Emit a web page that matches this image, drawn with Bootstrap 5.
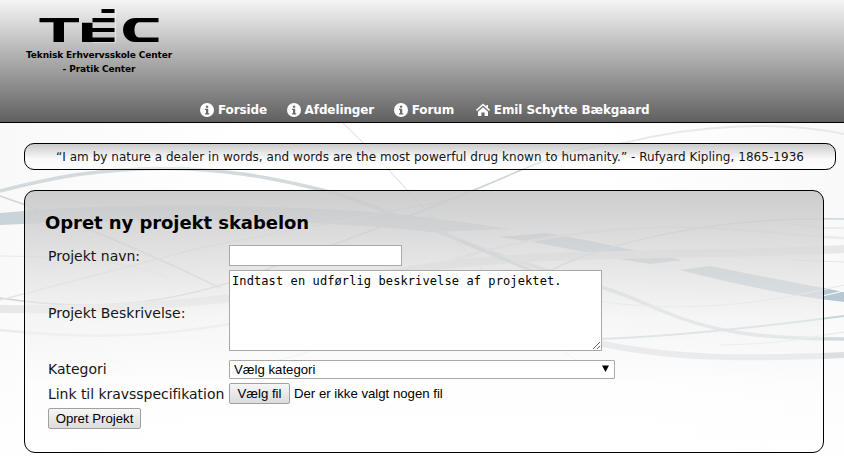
<!DOCTYPE html>
<html lang="da">
<head>
<meta charset="utf-8">
<meta name="viewport" content="width=device-width, initial-scale=1">
<title>Opret ny projekt skabelon</title>
<link href="https://cdn.jsdelivr.net/npm/bootstrap@5.3.0/dist/css/bootstrap.min.css" rel="stylesheet">
<style>
body{font:14px/17px "DejaVu Sans",sans-serif;color:#151515;background:#fff;height:471px}
.backdrop{z-index:-1}
.site-header{height:123px;border-bottom:1px solid #000;background:linear-gradient(#f5f5f5,#606060)}
.brand{width:198px;padding-top:8px;font-weight:bold;font-size:9px;line-height:14px;letter-spacing:-.11px;color:#000}
.brand svg{margin-bottom:5px}
.site-nav{padding-left:200px;margin-bottom:3px;gap:19.5px}
.site-nav a{font-weight:bold;font-size:12px;line-height:18px;letter-spacing:-.11px;color:#fff;gap:4px}
.site-nav a:last-child{margin-left:2.3px}
.quote{margin:20px 8px 0 24px;height:27px;border:1px solid #000;border-radius:10px;font-size:12px;line-height:26px;letter-spacing:.038px;background:linear-gradient(rgba(200,200,200,.95),rgba(250,250,250,.5) 60%,rgba(255,255,255,.4))}
.panel{margin:20px 20px 0 24px;height:263px;border:1px solid #000;border-radius:11px;padding:23px 20px 0;background:linear-gradient(rgba(200,200,200,.9),rgba(216,216,216,.78) 22%,rgba(240,240,240,.6) 48%,rgba(253,253,253,.45) 75%,rgba(255,255,255,.6))}
.panel h1{font-size:18px;line-height:18px;letter-spacing:-.06px;color:#000;margin:0 0 12px}
.sheet{display:grid;grid-template-columns:179px 386px;grid-template-rows:22px 86px 22px 21px 23px;row-gap:3px;column-gap:2px;margin-left:3px;align-items:center}
.sheet .lower{padding-top:2px}
.sheet .fit{letter-spacing:-.04px}
.sheet .fld{border:1px solid #a9a9a9;background-color:#fff;color:#000;padding:0;box-shadow:none}
#navn{width:173px;height:21px}
#beskrivelse{width:373px;height:81px;margin-bottom:4px;padding:2px;font:12px/16px "DejaVu Sans Mono",monospace;letter-spacing:.1px;resize:both}
.ctl{font:13.2px/15px "Liberation Sans",Arial,sans-serif;color:#000}
#kategori{height:19px;width:386px;border-radius:1px;padding:0 4px;font:13.2px/17px "Liberation Sans",Arial,sans-serif;background:#fff url("data:image/svg+xml,%3Csvg xmlns='http://www.w3.org/2000/svg' viewBox='0 0 7 7'%3E%3Cpath d='M0 .5h7L3.5 7z'/%3E%3C/svg%3E") no-repeat right 5px top 4px/7px 7px}
.old-btn{height:21px;border:1px solid #a0a0a0;border-radius:2px;padding:0;background:linear-gradient(#f6f6f6,#dcdcdc);color:#000;font:13.2px/19px "Liberation Sans",Arial,sans-serif}
.pick{width:61px}
.send{width:93px}
</style>
</head>
<body class="overflow-hidden position-relative">
<svg class="backdrop position-absolute top-0 start-0" width="844" height="471" viewBox="0 0 844 471" fill="none" aria-hidden="true">
  <defs>
    <linearGradient id="lf"><stop stop-color="#f9f9f9"/><stop offset="1" stop-color="#fff"/></linearGradient>
    <linearGradient id="fade" x2="0" y2="1"><stop offset=".45" stop-color="#fff" stop-opacity="0"/><stop offset="1" stop-color="#fff"/></linearGradient>
  </defs>
  <rect y="123" width="250" height="348" fill="url(#lf)"/>
  <rect x="594" y="123" width="250" height="348" fill="url(#lf)" transform="matrix(-1 0 0 1 1438 0)"/>
  <rect y="123" width="844" height="348" fill="url(#fade)"/>
  <path d="M0 191C60 176 100 169 160 168.500S270 177 322 190S450 240 530 265S610 288 660 310S760 339 844 339" stroke="#d3dadd" stroke-width="3.500"/>
  <path d="M0 213C90 204 200 204 300 208S450 220 510 229L430 232C360 224 200 214 0 225z" fill="#c8d4da"/>
  <path d="M498 237L545 233C590 240 640 252 682 260L650 264C600 257 550 243 498 237zM680 270L710 266C760 276 800 284 844 292V302C790 296 730 283 680 270z" fill="#b6c8d2"/>
  <path d="M822 296L844 291" stroke="#fff"/>
  <path d="M0 196C70 220 160 258 220 288" stroke="#ccd4d9" stroke-width="1.6"/>
  <path d="M0 298C90 312 170 306 260 272S390 225 474 190 560 150 624 143" stroke="#cbd2d8" stroke-width="1.6"/>
  <path d="M624 143C700 124 780 121 844 134" stroke="#e9e9e9" stroke-width="2"/>
  <path d="M343 123C380 158 410 195 450 235S480 265 485 285" stroke="#d8d8d8"/>
  <path d="M0 309C150 312 280 295 400 272S700 257 844 249" stroke="#e8e8e8" stroke-width="8"/>
  <path d="M0 330C110 342 190 335 300 310S430 255 560 236 760 234 844 238" stroke="#ebebeb" stroke-width="2.5"/>
  <path d="M0 256C100 257 150 268 170 278" stroke="#e9e9e9"/>
  <path d="M0 300L200 248 450 200" stroke="#e5e5e5" stroke-width="1.3"/>
  <path d="M540 276C600 242 720 216 844 219" stroke="#ccd5da" stroke-width="1.5"/>
  <path d="M600 339C680 336 760 327 844 316" stroke="#c5d5d9" stroke-width="1.8"/>
  <path d="M590 341C670 360 750 359 844 355" stroke="#dcdfe1" stroke-width="6"/>
  <path d="M590 300C680 314 760 305 844 285M720 345C790 344 820 335 844 332" stroke="#e6e6e6"/>
  <path d="M780 222C805 226 825 229 844 228M790 260L844 262" stroke="#e4e4e4" stroke-width="1.2"/>
  <path d="M460 241L540 274" stroke="#c2ced5" stroke-width="3"/>
  <path d="M270 362C310 354 340 340 375 325M560 348L578 362" stroke="#ededed"/>
</svg>

<header class="site-header d-flex flex-column justify-content-between">
  <div class="brand text-center">
    <svg class="d-block mx-auto" width="120" height="35" viewBox="39.5 8 120 35" aria-label="TEC">
      <path d="M103 9h13v33h-22v1h22" fill="none" stroke="#fff" stroke-opacity=".5"/>
      <path d="M40 18h39.500v4.300H64.500V42H54V22.300H40zM102 9h13v4h-13zM93 18h22v4.300H93zM82.500 22.800H93V28h22v4H93v5.500h22V42H82.500zM159 18v4.300h-19.500c-6 0-6 15.200 0 15.200H159V42h-23c-16 0-17-24 0-24z"/>
    </svg>
    <div>Teknisk Erhvervsskole Center</div>
    <div>- Pratik Center</div>
  </div>
  <svg class="d-none">
    <symbol id="info" viewBox="0 0 14 14"><circle cx="7" cy="7" r="7" fill="#fff"/><path d="M5.900 2.700h2.300v2H5.900zM5 5.700h3.200v4.500H9.200v1.200H5v-1.200h1V6.900H5z" fill="#6a6a6a"/></symbol>
    <symbol id="home" viewBox="0 0 14 14"><path d="M.5 7.500L7 1.500l6.500 6M11.200 5V2" fill="none" stroke="#fff" stroke-width="1.600"/><path d="M7 4.200l5 4.600V13H8.600V9.500H5.400V13H2V8.800z" fill="#fff"/></symbol>
  </svg>
  <nav class="site-nav d-flex">
    <a href="#" class="d-flex align-items-center text-decoration-none"><svg width="14" height="14"><use href="#info"/></svg>Forside</a>
    <a href="#" class="d-flex align-items-center text-decoration-none"><svg width="14" height="14"><use href="#info"/></svg>Afdelinger</a>
    <a href="#" class="d-flex align-items-center text-decoration-none"><svg width="14" height="14"><use href="#info"/></svg>Forum</a>
    <a href="#" class="d-flex align-items-center text-decoration-none"><svg width="14" height="14"><use href="#home"/></svg>Emil Schytte Bækgaard</a>
  </nav>
</header>

<div class="quote text-center text-nowrap">“I am by nature a dealer in words, and words are the most powerful drug known to humanity.” - Rufyard Kipling, 1865-1936</div>

<main class="panel">
  <h1 class="fw-bold">Opret ny projekt skabelon</h1>
  <form class="sheet text-nowrap">
    <label for="navn" class="lower">Projekt navn:</label>
    <input id="navn" type="text" class="form-control rounded-0 fld">
    <label for="beskrivelse" class="lower">Projekt Beskrivelse:</label>
    <textarea id="beskrivelse" class="form-control rounded-0 fld">Indtast en udførlig beskrivelse af projektet.</textarea>
    <label for="kategori">Kategori</label>
    <select id="kategori" class="form-select fld"><option>Vælg kategori</option></select>
    <span class="lower fit">Link til kravsspecifikation</span>
    <div class="d-flex align-items-center gap-1 ctl"><button type="button" class="btn old-btn pick">Vælg fil</button><span>Der er ikke valgt nogen fil</span></div>
    <button type="button" class="btn old-btn send">Opret Projekt</button>
  </form>
</main>
<script src="https://cdn.jsdelivr.net/npm/bootstrap@5.3.0/dist/js/bootstrap.bundle.min.js"></script>
</body>
</html>
